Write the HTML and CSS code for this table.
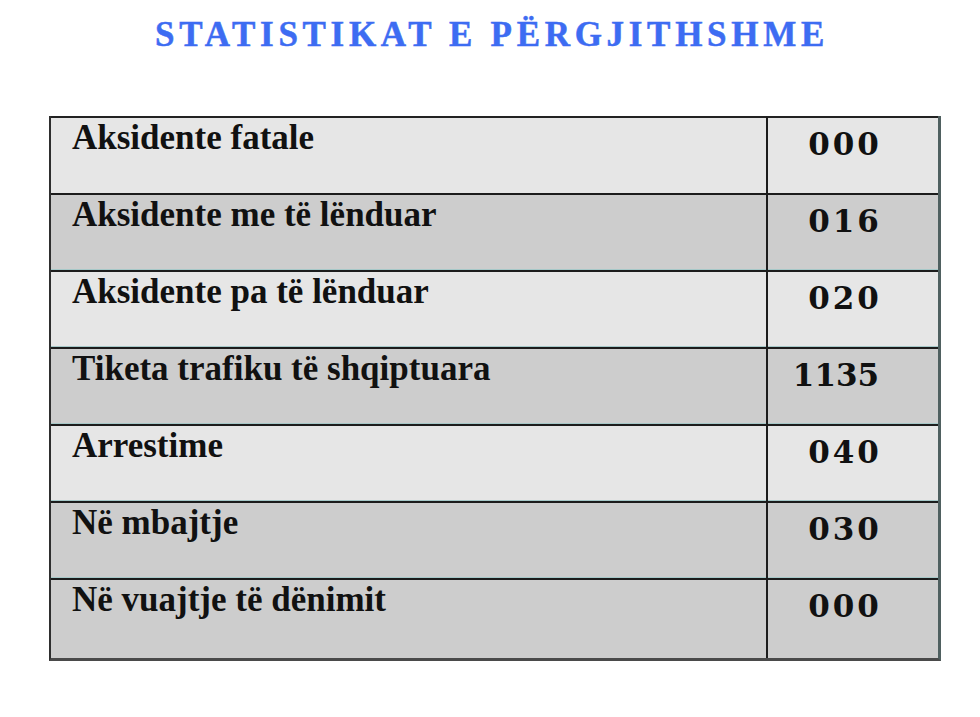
FILE: index.html
```html
<!DOCTYPE html>
<html lang="sq">
<head>
<meta charset="utf-8">
<title>Statistikat e përgjithshme</title>
<link rel="stylesheet" href="styles.css">
</head>
<body>
<h1 class="title">STATISTIKAT E PËRGJITHSHME</h1>
<table class="stats">
  <tbody>
    <tr class="light"><td class="label">Aksidente fatale</td><td class="num">000</td></tr>
    <tr class="dark"><td class="label">Aksidente me të lënduar</td><td class="num">016</td></tr>
    <tr class="light"><td class="label">Aksidente pa të lënduar</td><td class="num">020</td></tr>
    <tr class="dark"><td class="label">Tiketa trafiku të shqiptuara</td><td class="num num-wide">1135</td></tr>
    <tr class="light"><td class="label">Arrestime</td><td class="num">040</td></tr>
    <tr class="dark"><td class="label">Në mbajtje</td><td class="num">030</td></tr>
    <tr class="dark last"><td class="label">Në vuajtje të dënimit</td><td class="num">000</td></tr>
  </tbody>
</table>
</body>
</html>
```
FILE: styles.css
```css
html, body {
  margin: 0;
  padding: 0;
  background: #ffffff;
}

body {
  width: 980px;
  height: 717px;
  overflow: hidden;
  font-family: "Liberation Serif", "Times New Roman", serif;
  color: #111111;
}

.title {
  margin: 14px 0 0 0;
  height: 42px;
  line-height: 42px;
  font-size: 35px;
  font-weight: bold;
  letter-spacing: 4.7px;
  text-align: center;
  color: #3d6cf2;
  padding-left: 4px;
  -webkit-text-stroke: 0.5px #3d6cf2;
}

.stats {
  margin: 60px 0 0 49px;
  width: 892px;
  border-collapse: separate;
  border-spacing: 0;
  border-left: 2px solid #2e2e2e;
  border-right: 3px solid #4f6060;
  border-bottom: 3px solid #4a4a4a;
  table-layout: fixed;
}

.stats td {
  height: 75px;
  padding: 0;
  vertical-align: top;
  border-top: 2px solid #1c1c1c;
  box-shadow: inset 0 -1px 0 #a6c8c8;
}

.stats tr:first-child td {
  border-top: 2px solid #222222;
  box-shadow: none;
}

.stats tr.last td {
  height: 78px;
  box-shadow: none;
}

.light td {
  background: #e6e6e6;
}

.dark td {
  background: #cdcdcd;
}

.label {
  width: 694px;
  padding-left: 21px !important;
  font-size: 35px;
  font-weight: bold;
  line-height: 40px;
  white-space: nowrap;
}

.num {
  border-left: 2px solid #1c1c1c;
  text-align: center;
  font-family: "DejaVu Serif", "Liberation Serif", serif;
  font-size: 31px;
  font-weight: bold;
  letter-spacing: 3px;
  line-height: 52px;
  padding-right: 16px !important;
}

.num-wide {
  letter-spacing: 0;
  padding-right: 34px !important;
}
```
